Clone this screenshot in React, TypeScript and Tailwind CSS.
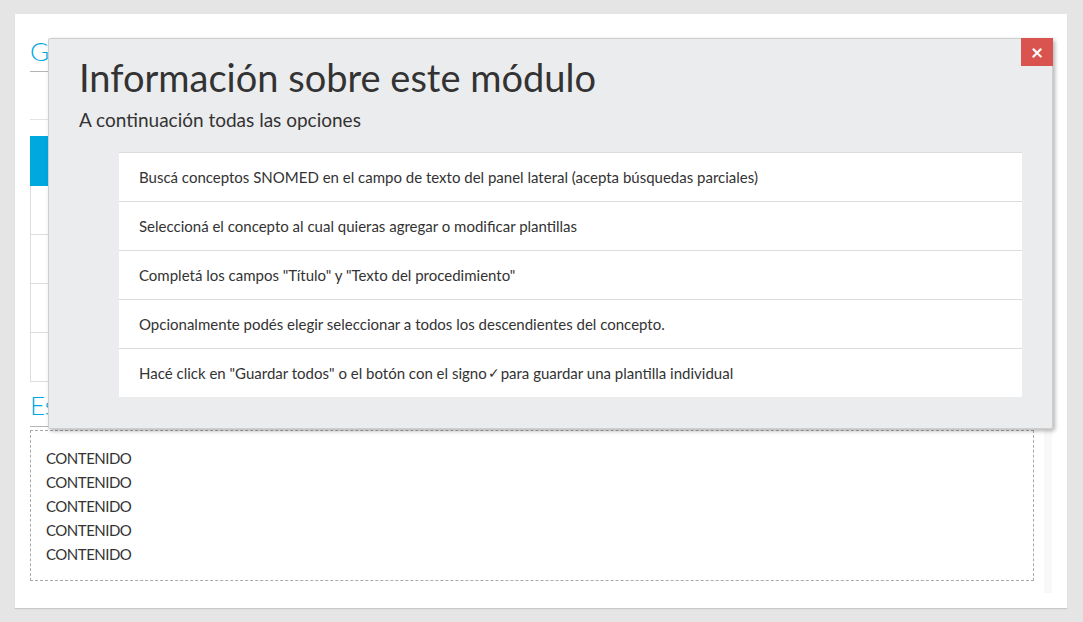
import React from "react";

const items = [
  "Buscá conceptos SNOMED en el campo de texto del panel lateral (acepta búsquedas parciales)",
  "Seleccioná el concepto al cual quieras agregar o modificar plantillas",
  'Completá los campos "Título" y "Texto del procedimiento"',
  "Opcionalmente podés elegir seleccionar a todos los descendientes del concepto.",
];

export default function App() {
  return (
    <div
      className="relative h-[622px] w-[1083px] overflow-hidden bg-[#e5e5e5] pl-[15px] pr-[16px] pt-[14px] text-[#333]"
      style={{ fontFamily: "Lato, 'Liberation Sans', sans-serif" }}
    >
      <div className="flex h-[594px] bg-white pl-[15px] shadow-[0_1px_1px_rgba(0,0,0,0.12)]">
        <div className="flex w-[1022px] flex-col">
          <div className="h-[58px] border-b border-[#b5b5b5] pt-[22px] text-[26px] font-light leading-[30px] text-[#00a8e0]">
            Gestión de plantillas
          </div>
          <div className="h-[48px] border-b border-[#e3e3e3]" />
          <div className="mt-[16px] h-[50px] bg-[#00a8e0]" />
          <div className="flex flex-col border-l border-[#ddd]">
            <div className="h-[49px] border-b border-[#ddd]" />
            <div className="h-[49px] border-b border-[#ddd]" />
            <div className="h-[49px] border-b border-[#ddd]" />
            <div className="h-[49px] border-b border-[#ddd]" />
          </div>
          <div className="h-[45px] border-b border-[#b5b5b5] pt-[8px] text-[26px] font-light leading-[30px] text-[#00a8e0]">
            Estructura
          </div>
          <div className="mt-[3px] flex">
            <div className="h-[151px] w-[1004px] shrink-0 border border-dashed border-[#aaa] px-[15px] py-[15px] text-[15px] leading-[24px] tracking-[-0.5px]">
              <div>CONTENIDO</div>
              <div>CONTENIDO</div>
              <div>CONTENIDO</div>
              <div>CONTENIDO</div>
              <div>CONTENIDO</div>
            </div>
            <div className="ml-[10px] h-[163px] w-[8px] shrink-0 bg-[#f8f8f8]" />
          </div>
        </div>
      </div>

      <div className="absolute left-[48px] top-[38px] h-[391px] w-[1005px] rounded-[2px] border border-[#cfcfcf] bg-[#ebecee] shadow-[2px_2px_4px_rgba(0,0,0,0.3)]">
        <button className="absolute right-[-1px] top-[-1px] flex h-[28px] w-[32px] items-center justify-center bg-[#d9534f] pb-[2px] text-[21px] font-bold leading-none text-white">
          ×
        </button>
        <div className="pl-[30px] pt-[13px]">
          <h1 className="text-[38px] font-normal leading-[50px] text-[#333]">
            Información sobre este módulo
          </h1>
          <p className="mt-[5px] text-[19px] leading-[26px] text-[#333]">
            A continuación todas las opciones
          </p>
        </div>
        <div className="ml-[70px] mr-[30px] mt-[19px] bg-white text-[15px] leading-[20px]">
          {items.map((t) => (
            <div key={t} className="flex h-[49px] items-center border-t border-[#dcdcdc] px-[20px]">
              {t}
            </div>
          ))}
          <div className="flex h-[49px] items-center border-t border-[#dcdcdc] px-[20px]">
            Hacé click en "Guardar todos" o el botón con el signo
            <span className="mx-[1px] text-[14px]">✓</span>
            para guardar una plantilla individual
          </div>
        </div>
      </div>
    </div>
  );
}
